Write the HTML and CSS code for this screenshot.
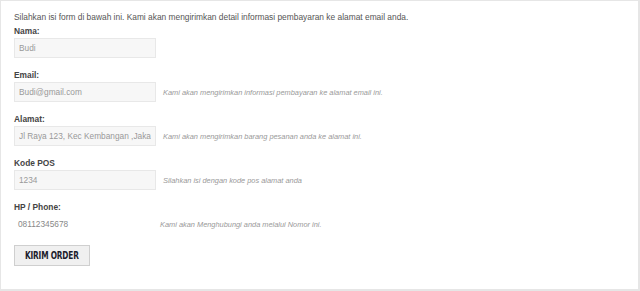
FILE: index.html
```html
<!DOCTYPE html>
<html lang="id">
<head>
<meta charset="utf-8">
<title>Form Order</title>
<link rel="stylesheet" href="styles.css">
</head>
<body>
<div class="box">
  <p class="intro">Silahkan isi form di bawah ini. Kami akan mengirimkan detail informasi pembayaran ke alamat email anda.</p>
  <div class="field">
    <label class="label">Nama:</label>
    <div class="row"><input class="input" type="text" value="Budi"></div>
  </div>
  <div class="field">
    <label class="label">Email:</label>
    <div class="row"><input class="input" type="text" value="Budi@gmail.com"><span class="help">Kami akan mengirimkan informasi pembayaran ke alamat email ini.</span></div>
  </div>
  <div class="field">
    <label class="label">Alamat:</label>
    <div class="row"><input class="input" type="text" value="Jl Raya 123, Kec Kembangan ,Jakarta Barat"><span class="help">Kami akan mengirimkan barang pesanan anda ke alamat ini.</span></div>
  </div>
  <div class="field">
    <label class="label">Kode POS</label>
    <div class="row"><input class="input" type="text" value="1234"><span class="help">Silahkan isi dengan kode pos alamat anda</span></div>
  </div>
  <div class="field phone">
    <label class="label">HP / Phone:</label>
    <div class="row"><span class="plain">08112345678</span><span class="help">Kami akan Menghubungi anda melalui Nomor ini.</span></div>
  </div>
  <button class="btn" type="button"><span class="btn-text">KIRIM ORDER</span></button>
</div>
</body>
</html>
```
FILE: styles.css
```css
html, body {
  margin: 0;
  padding: 0;
  background: #fff;
}
.box {
  box-sizing: border-box;
  width: 640px;
  height: 291px;
  border: 1px solid #e6e6e6;
  border-right-width: 2px;
  border-bottom-width: 2px;
  padding: 9px 0 0 13px;
  font-family: "Liberation Sans", Arial, sans-serif;
}
.intro {
  margin: 0;
  font-size: 8.4px;
  line-height: 14px;
  color: #555;
}
.field {
  margin-bottom: 10px;
}
.label {
  display: block;
  font-size: 8.4px;
  line-height: 14px;
  font-weight: bold;
  color: #444;
}
.row {
  display: flex;
  align-items: center;
  height: 20px;
}
.input {
  box-sizing: border-box;
  width: 142px;
  height: 20px;
  margin: 0;
  padding: 0 4px;
  border: 1px solid #e8e8e8;
  background: #f7f7f7;
  font-family: "Liberation Sans", Arial, sans-serif;
  font-size: 8.3px;
  color: #999;
  outline: none;
}
.help {
  margin-left: 7px;
  font-size: 7.4px;
  font-style: italic;
  color: #999;
}
.plain {
  box-sizing: border-box;
  width: 141px;
  padding-left: 4px;
  font-size: 8.3px;
  color: #888;
}
.phone .help {
  margin-left: 5px;
}
.btn {
  display: flex;
  align-items: center;
  justify-content: center;
  box-sizing: border-box;
  width: 76px;
  height: 21px;
  margin: 11px 0 0 0;
  padding: 0;
  border: 1px solid #cfcfcf;
  background: #f0f0f0;
  white-space: nowrap;
}
.btn-text {
  display: inline-block;
  font-family: "DejaVu Sans Condensed", "DejaVu Sans", sans-serif;
  font-stretch: condensed;
  font-weight: bold;
  font-size: 10px;
  letter-spacing: -0.2px;
  color: #1c1c2c;
  transform: scaleX(0.82);
}
```
